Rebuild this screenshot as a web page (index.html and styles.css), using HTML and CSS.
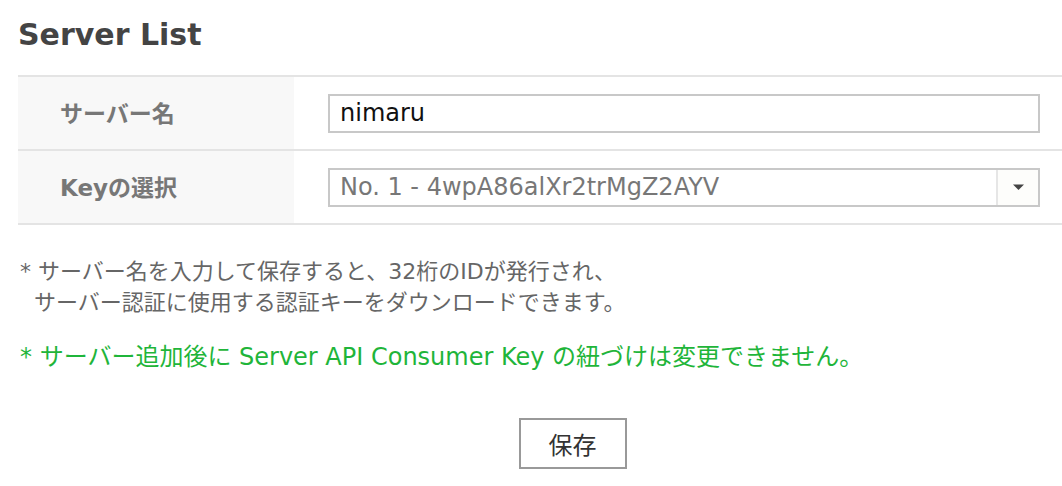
FILE: index.html
```html
<!DOCTYPE html>
<html lang="ja">
<head>
<meta charset="utf-8">
<title>Server List</title>
<link rel="stylesheet" href="styles.css">
</head>
<body>
<div class="page">
  <h1 class="title">Server List</h1>
  <div class="form-table">
    <div class="row">
      <div class="label">サーバー名</div>
      <div class="field">
        <div class="input">nimaru</div>
      </div>
    </div>
    <div class="row">
      <div class="label">Keyの選択</div>
      <div class="field">
        <div class="select">
          <span class="select-text">No. 1 - 4wpA86alXr2trMgZ2AYV</span>
          <span class="select-arrow"><svg width="13" height="8" viewBox="0 0 13 8"><path d="M1 1.5 H12 L6.5 7 Z" fill="#444"/></svg></span>
        </div>
      </div>
    </div>
  </div>
  <p class="note">* サーバー名を入力して保存すると、32桁のIDが発行され、<br><span class="indent">サーバー認証に使用する認証キーをダウンロードできます。</span></p>
  <p class="note green">* サーバー追加後に Server API Consumer Key の紐づけは変更できません。</p>
  <div class="actions">
    <button class="btn" type="button">保存</button>
  </div>
</div>
</body>
</html>
```

FILE: styles.css
```css
html, body {
  margin: 0;
  padding: 0;
  background: #fff;
}
body {
  font-family: "DejaVu Sans", "Noto Sans CJK JP", sans-serif;
  color: #666;
}
.page {
  padding: 17px 0 0 18px;
}
.title {
  margin: 0 0 22px 0;
  font-size: 30px;
  line-height: 36px;
  font-weight: bold;
  color: #444;
}
.form-table {
  border-top: 2px solid #e4e4e4;
}
.row {
  display: flex;
  border-bottom: 2px solid #e4e4e4;
  height: 72px;
}
.label {
  width: 276px;
  flex: none;
  background: #f8f8f8;
  box-sizing: border-box;
  padding-left: 42px;
  padding-bottom: 2px;
  display: flex;
  align-items: center;
  font-size: 23px;
  font-weight: bold;
  color: #777;
}
.field {
  flex: 1;
  display: flex;
  align-items: center;
  padding: 0 22px 0 34px;
}
.input, .select {
  width: 100%;
  height: 39px;
  box-sizing: border-box;
  border: 2px solid #c8c8c8;
  display: flex;
  align-items: center;
  font-size: 24px;
}
.input {
  padding-left: 10px;
  color: #111;
}
.select {
  color: #777;
}
.select-text {
  flex: 1;
  padding-left: 10px;
}
.select-arrow {
  width: 40px;
  height: 100%;
  border-left: 2px solid #e6e6e6;
  display: flex;
  align-items: center;
  justify-content: center;
  background: #fdfdfb;
}
.note {
  margin: 31px 0 0 2px;
  font-size: 22px;
  line-height: 31px;
  color: #666;
}
.indent {
  padding-left: 14px;
}
.note.green {
  margin-top: 24px;
  color: #1fb53a;
  font-size: 24px;
}
.actions {
  display: flex;
  justify-content: center;
  padding-left: 65px;
  margin-top: 45px;
}
.btn {
  width: 108px;
  height: 51px;
  border: 2px solid #999;
  background: #fff;
  font-family: "Noto Sans CJK JP", sans-serif;
  font-size: 24px;
  color: #333;
  padding: 0;
}
```
